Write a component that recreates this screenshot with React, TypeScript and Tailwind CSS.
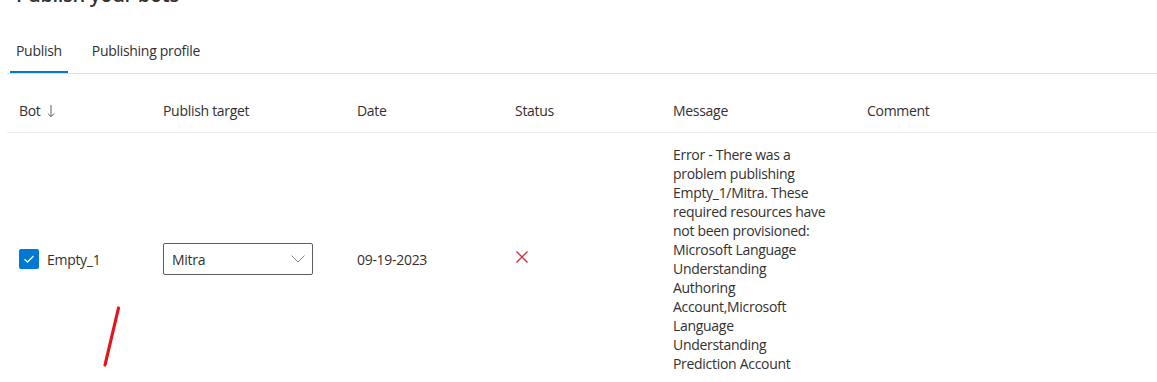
export default function App() {
  const lines = [
    "Error - There was a",
    "problem publishing",
    "Empty_1/Mitra. These",
    "required resources have",
    "not been provisioned:",
    "Microsoft Language",
    "Understanding",
    "Authoring",
    "Account,Microsoft",
    "Language",
    "Understanding",
    "Prediction Account",
  ];
  return (
    <div className="relative h-[382px] w-full overflow-hidden bg-white font-['Segoe_UI','Open_Sans',sans-serif] text-[14px] tracking-[-0.3px] text-[#323130]">
      <div className="pl-[7px]">
        <h1 className="-mt-[19px] ml-[9px] text-[20px] font-semibold leading-[28px] text-[#323130]">
          Publish your bots
        </h1>
        <div className="mt-[20px] flex border-b border-[#e1dfdd]">
          <div className="ml-[3px] flex h-[44px] items-center border-b-2 border-[#0078d4] px-[6px] font-medium">
            Publish
          </div>
          <div className="ml-[18px] flex h-[44px] items-center border-b-2 border-transparent px-[6px]">
            Publishing profile
          </div>
        </div>
        <div className="mt-[15px] grid h-[44px] grid-cols-[144px_194px_158px_158px_194px_1fr] items-center border-b border-[#edebe9] font-medium">
          <div className="flex items-center px-3">
            <span>Bot</span>
            <svg className="ml-[6px]" width="8" height="14" viewBox="0 0 8 14">
              <path d="M4 1 V12.5 M0.8 9.5 L4 12.7 L7.2 9.5" fill="none" stroke="#605e5c" strokeWidth="1" />
            </svg>
          </div>
          <div className="px-3">Publish target</div>
          <div className="px-3">Date</div>
          <div className="px-3">Status</div>
          <div className="px-3">Message</div>
          <div className="px-3">Comment</div>
        </div>
        <div className="grid grid-cols-[144px_194px_158px_158px_194px_1fr] items-center">
          <div className="flex items-center gap-2 px-3">
            <div className="flex h-5 w-5 items-center justify-center rounded-[2px] bg-[#0078d4]">
              <svg width="12" height="12" viewBox="0 0 12 12">
                <path d="M1.5 6.2 L4.5 9 L10.5 3" fill="none" stroke="#ffffff" strokeWidth="1.3" />
              </svg>
            </div>
            <span className="text-[#323130]">Empty_1</span>
          </div>
          <div className="px-3">
            <div className="flex h-[32px] w-[150px] items-center justify-between rounded-[2px] border border-[#605e5c] pl-[8px] pr-[7px]">
              <span>Mitra</span>
              <svg width="14" height="8" viewBox="0 0 14 8">
                <path d="M0.5 0.5 L7 7 L13.5 0.5" fill="none" stroke="#8a8886" strokeWidth="1" />
              </svg>
            </div>
          </div>
          <div className="px-3">09-19-2023</div>
          <div className="px-3">
            <svg className="mb-[4px] ml-[1px] block" width="12" height="12" viewBox="0 0 12 12">
              <path d="M0.5 0.5 L11.5 11.5 M11.5 0.5 L0.5 11.5" fill="none" stroke="#d13438" strokeWidth="1.4" />
            </svg>
          </div>
          <div className="px-3 pt-[12px] pb-[12px] leading-[19px]">
            {lines.map((l, i) => (
              <div key={i} className="whitespace-nowrap">{l}</div>
            ))}
          </div>
          <div className="px-3" />
        </div>
      </div>
      <svg className="pointer-events-none absolute left-0 top-0" width="1157" height="382">
        <line x1="118.5" y1="308" x2="105" y2="365" stroke="#e3161b" strokeWidth="3.2" strokeLinecap="round" />
      </svg>
    </div>
  );
}
